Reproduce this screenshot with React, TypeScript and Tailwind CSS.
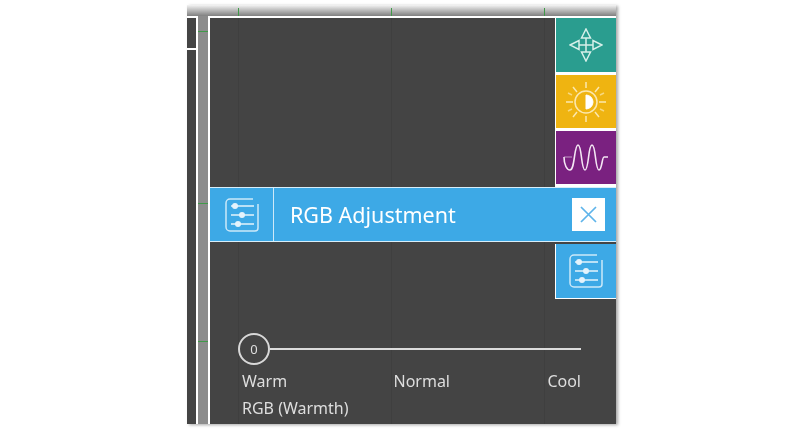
function SlidersIcon({ className }: { className?: string }) {
  return (
    <svg className={className} viewBox="0 0 34 34" fill="none" stroke="currentColor" aria-hidden>
      <path strokeWidth={1.5} d="M1 5v24a4 4 0 0 0 4 4h25a3 3 0 0 0 3-3V6M1 5a4 4 0 0 1 4-4h23" opacity={0.85} />
      <path strokeWidth={1.5} d="M6 8h23M6 17h23M6 26h23" />
      <circle cx={10} cy={8} r={3} fill="currentColor" stroke="none" />
      <circle cx={17} cy={17} r={3} fill="currentColor" stroke="none" />
      <circle cx={13} cy={26} r={3} fill="currentColor" stroke="none" />
    </svg>
  );
}

function MoveIcon() {
  return (
    <svg className="h-[34px] w-[34px] text-[#d6efe9]" viewBox="0 0 34 34" fill="none" stroke="currentColor" strokeWidth={1.5} aria-hidden>
      <path d="M17 10v14M10 17h14" />
      <path d="M17 1l4.5 9h-9zM17 33l4.5-9h-9zM1 17l9-4.5v9zM33 17l-9-4.5v9z" />
    </svg>
  );
}

function BrightnessIcon() {
  return (
    <svg className="h-[42px] w-[42px] text-[#fbe7ae]" viewBox="0 0 42 42" fill="none" stroke="currentColor" strokeWidth={1.5} aria-hidden>
      <circle cx={21} cy={21} r={11} />
      <path d="M21 14a7 7 0 0 1 0 14z" fill="#ffffff" stroke="#ffffff" strokeWidth={1} />
      <path d="M21 1v6M21 35v6M1 21h7M34 21h7M8 6l4 5M34 6l-4 5M8 36l4-5M34 36l-4-5" />
      <path d="M3 12l4 2M39 12l-4 2M3 30l4-2M39 30l-4-2" opacity={0.7} />
    </svg>
  );
}

function WaveIcon() {
  return (
    <svg className="h-[30px] w-[46px] text-[#f4e6f4]" viewBox="0 0 46 30" fill="none" stroke="currentColor" strokeWidth={1.6} aria-hidden>
      <path d="M1 14c0 8 3 13 6 13 5 0 4-25 8-25s3 25 7 25 3-25 7-25 3 25 7 25c3 0 3-13 5-13h4" />
      <path d="M1 14h8" strokeWidth={1} opacity={0.6} />
    </svg>
  );
}

export default function App() {
  return (
    <div className="h-[430px] w-[800px] overflow-hidden bg-white pl-[187px] pt-[5px] font-['Noto_Sans',sans-serif]">
      <div className="flex h-[419px] w-[429px] flex-col shadow-[2px_1px_3px_rgba(0,0,0,0.35)] blur-[0.6px]">
        {/* top ruler strip */}
        <div className="relative h-[11px] shrink-0 bg-gradient-to-b from-[#f4f4f4] to-[#808080]">
          <span className="absolute left-[51px] top-[3px] h-[8px] w-px bg-[#3f9a48]" />
          <span className="absolute left-[204px] top-[3px] h-[8px] w-px bg-[#3f9a48]" />
          <span className="absolute left-[357px] top-[3px] h-[8px] w-px bg-[#3f9a48]" />
        </div>

        <div className="flex min-h-0 flex-1">
          {/* left preview column */}
          <div className="flex w-[11px] shrink-0 flex-col border-r-2 border-t-2 border-white bg-[#444444]">
            <div className="h-[32px] border-b-2 border-white" />
          </div>
          <div className="relative w-[10px] shrink-0 bg-[#8c8c8c]">
            <span className="absolute left-0 top-[15px] h-px w-full bg-[#3f9a48]" />
            <span className="absolute left-0 top-[187px] h-px w-full bg-[#3f9a48]" />
            <span className="absolute left-0 top-[325px] h-px w-full bg-[#3f9a48]" />
          </div>

          {/* main panel */}
          <div className="relative flex min-w-0 flex-1 flex-col border-l-2 border-t-2 border-white bg-[#444444]">
            <span className="absolute left-[28px] top-0 h-full w-px bg-[#3f3f3f]" />
            <span className="absolute left-[181px] top-0 h-full w-px bg-[#3f3f3f]" />
            <span className="absolute left-[334px] top-0 h-full w-px bg-[#3f3f3f]" />

            <div className="relative flex h-[169px] shrink-0 justify-end">
              <div className="flex w-[61px] flex-col gap-[3px] border-l border-white bg-white pb-[2px]">
                <div className="flex h-[54px] items-center justify-center bg-[#2a9d8f]"><MoveIcon /></div>
                <div className="flex h-[53px] items-center justify-center bg-[#efb411]"><BrightnessIcon /></div>
                <div className="flex h-[53px] items-center justify-center bg-[#7a2180]"><WaveIcon /></div>
              </div>
            </div>

            {/* blue title bar */}
            <div className="relative flex h-[55px] shrink-0 items-stretch border-y border-[#d8eefa] bg-[#3da9e6] text-white">
              <div className="flex w-[64px] items-center justify-center border-r border-[#cfe9f8]">
                <SlidersIcon className="h-[34px] w-[34px] text-[#e4f3fc]" />
              </div>
              <div className="flex flex-1 items-center pl-[16px] text-[21.5px] leading-none">RGB Adjustment</div>
              <div className="flex w-[44px] items-center">
                <div className="flex h-[33px] w-[33px] items-center justify-center bg-white text-[#5eb4ea]">
                  <svg className="h-[17px] w-[17px]" viewBox="0 0 17 17" stroke="currentColor" strokeWidth={1.7} aria-hidden>
                    <path d="M1 1l15 15M16 1L1 16" />
                  </svg>
                </div>
              </div>
            </div>

            <div className="relative flex flex-1 flex-col">
              <div className="mt-[2px] flex justify-end">
                <div className="flex h-[55px] w-[61px] items-center justify-center border-b border-l border-white bg-[#3da9e6]">
                  <SlidersIcon className="h-[34px] w-[34px] text-[#e4f3fc]" />
                </div>
              </div>

              {/* warmth slider */}
              <div className="ml-[28px] mr-[35px] mt-[34px] flex flex-col text-[16px] leading-[20px] text-[#dedede]">
                <div className="flex items-center">
                  <div className="flex h-[32px] w-[32px] shrink-0 items-center justify-center rounded-full border-2 border-[#d8d8d8] text-[13px]">0</div>
                  <div className="h-[2px] flex-1 bg-[#dcdcdc]" />
                </div>
                <div className="mt-[6px] flex justify-between pl-[4px]">
                  <span>Warm</span>
                  <span className="ml-[9px]">Normal</span>
                  <span>Cool</span>
                </div>
                <div className="mt-[7px] pl-[4px]">RGB (Warmth)</div>
              </div>
            </div>
          </div>
        </div>
      </div>
    </div>
  );
}
